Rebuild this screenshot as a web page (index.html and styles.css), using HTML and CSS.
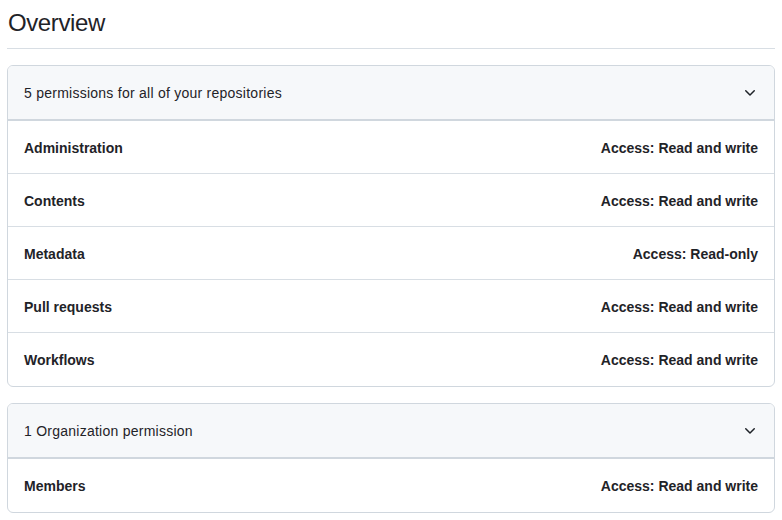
FILE: index.html
```html
<!DOCTYPE html>
<html>
<head>
<meta charset="utf-8">
<link rel="stylesheet" href="styles.css">
</head>
<body>
<div class="page">
  <h2 class="subhead">Overview</h2>

  <div class="box">
    <div class="box-header">
      <span class="title">5 permissions for all of your repositories</span>
      <svg class="chev" width="16" height="16" viewBox="0 0 16 16"><path d="M12.78 5.22a.749.749 0 0 1 0 1.06l-4.25 4.25a.749.749 0 0 1-1.06 0L3.22 6.28a.749.749 0 1 1 1.06-1.06L8 8.94l3.72-3.72a.749.749 0 0 1 1.06 0Z"/></svg>
    </div>
    <div class="row"><span>Administration</span><span>Access: Read and write</span></div>
    <div class="row"><span>Contents</span><span>Access: Read and write</span></div>
    <div class="row"><span>Metadata</span><span>Access: Read-only</span></div>
    <div class="row"><span>Pull requests</span><span>Access: Read and write</span></div>
    <div class="row"><span>Workflows</span><span>Access: Read and write</span></div>
  </div>

  <div class="box">
    <div class="box-header">
      <span class="title">1 Organization permission</span>
      <svg class="chev" width="16" height="16" viewBox="0 0 16 16"><path d="M12.78 5.22a.749.749 0 0 1 0 1.06l-4.25 4.25a.749.749 0 0 1-1.06 0L3.22 6.28a.749.749 0 1 1 1.06-1.06L8 8.94l3.72-3.72a.749.749 0 0 1 1.06 0Z"/></svg>
    </div>
    <div class="row"><span>Members</span><span>Access: Read and write</span></div>
  </div>
</div>
</body>
</html>
```

FILE: styles.css
```css
* { box-sizing: border-box; }
html, body { margin: 0; padding: 0; background: #ffffff; }
body {
  font-family: "Liberation Sans", Arial, sans-serif;
  color: #1f2328;
  font-size: 14px;
}
.page {
  padding: 5px 7px 0 7px;
}
.subhead {
  margin: 0 0 16px 0;
  font-size: 24px;
  font-weight: 400;
  line-height: 36px;
  letter-spacing: -0.4px;
  padding: 0 0 7px 1px;
  border-bottom: 1px solid #d8dee4;
}
.box {
  border: 1px solid #d0d7de;
  border-radius: 6px;
  overflow: hidden;
  margin-bottom: 16px;
}
.box-header {
  display: flex;
  justify-content: space-between;
  align-items: center;
  background: #f6f8fa;
  padding: 17px 16px 15px 16px;
  line-height: 21px;
  border-bottom: 2px solid #d0d7de;
}
.title { letter-spacing: 0.25px; }
.chev { fill: #1f2328; display: block; margin-top: -2px; }
.row {
  display: flex;
  justify-content: space-between;
  align-items: center;
  padding: 17px 16px 15px 16px;
  line-height: 20px;
  font-weight: 700;
}
.row:last-child { padding-bottom: 16px; }
.row + .row { border-top: 1px solid #d8dee4; }
```
